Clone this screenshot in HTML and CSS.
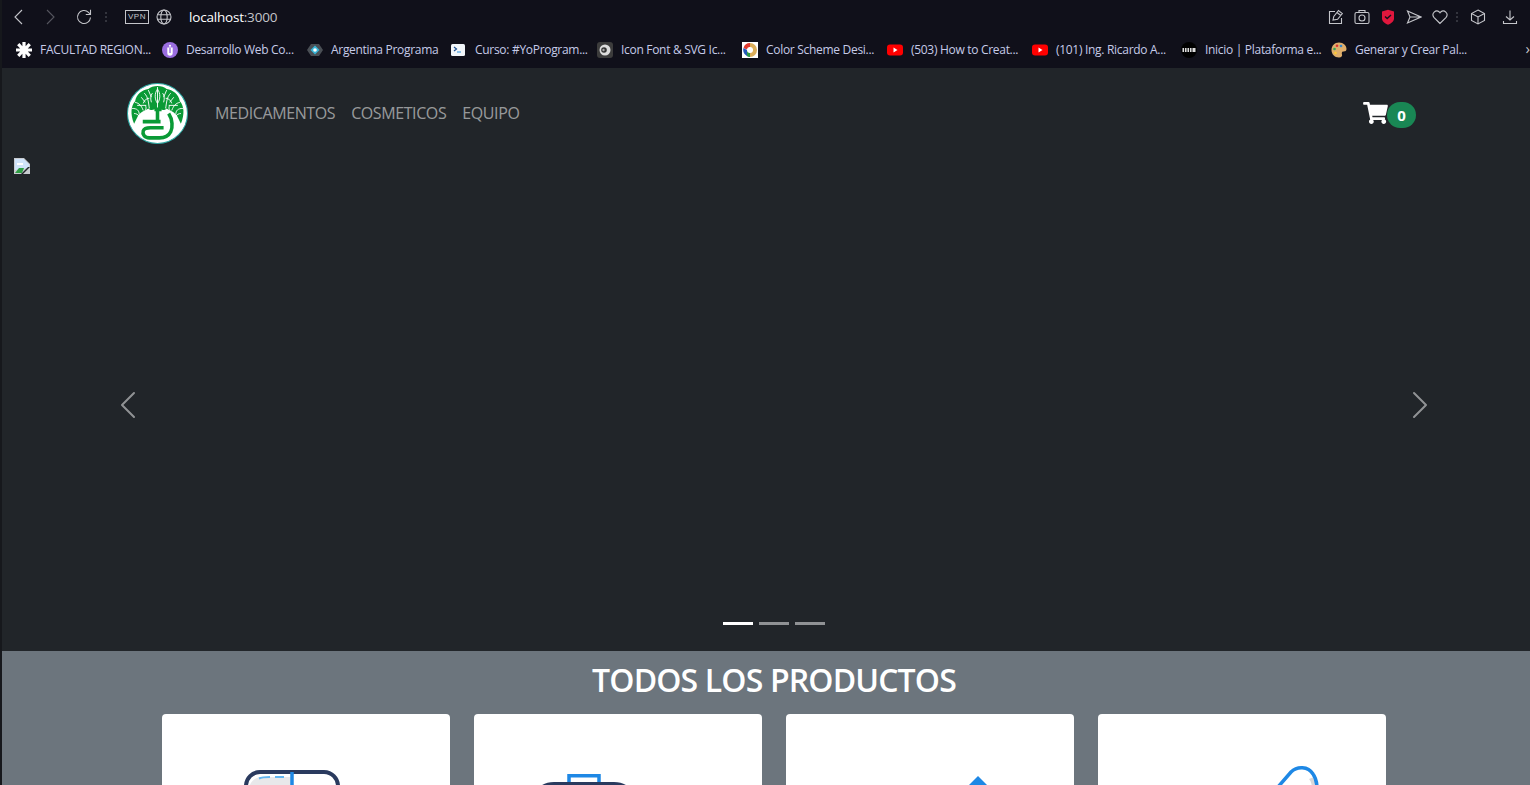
FILE: index.html
```html
<!DOCTYPE html>
<html lang="es">
<head>
<meta charset="utf-8">
<title>Farmacia</title>
<link rel="stylesheet" href="styles.css">
</head>
<body>
<div class="chrome">
  <div class="toolbar">
    <div class="tools-left">
      <svg class="ic back" viewBox="0 0 16 16"><path d="M12 1 5 8l7 7"/></svg>
      <svg class="ic fwd" viewBox="0 0 16 16"><path d="m4 1 7 7-7 7"/></svg>
      <svg class="ic reload" viewBox="0 0 16 16"><path d="M14.500 8.500a6.500 6.500 0 1 1-2-5.200L14 5M14.500 .8v4.700H9.800"/></svg>
      <span class="dots"><i></i><i></i><i></i></span>
      <span class="vpn">VPN</span>
      <svg class="ic globe" viewBox="0 0 16 16"><circle cx="8" cy="8" r="7"/><ellipse cx="8" cy="8" rx="3.200" ry="7"/><path d="M1.500 5.700h13M1.500 10.300h13"/></svg>
      <span class="url"><b>localhost</b>:3000</span>
    </div>
    <div class="tools-right">
      <svg class="ic" viewBox="0 0 16 16"><path d="M7 2.500H1.500v12h12V9"/><path d="m5 11 .8-3.500 4.700-6 3.800 3-4.700 5.800zM9 3.500l3.800 3"/></svg>
      <svg class="ic r-gap" viewBox="0 0 16 16"><rect x="1" y="3.500" width="14" height="11" rx="1.500"/><circle cx="8" cy="9" r="3"/><path d="M5 3.500V1.500h6v2"/></svg>
      <svg class="ic r-gap" viewBox="0 0 16 16"><path class="sh" d="M2 2.500 8 .8l6 1.700v7c0 3-3 5.200-6 6.200-3-1-6-3.200-6-6.200z"/><path class="ck" d="m5 7.500 2.200 2L11 6"/></svg>
      <svg class="ic r-gap" viewBox="0 0 16 16"><path d="M1.500 2 15 8 1.500 14 4 8zM4 8h11"/></svg>
      <svg class="ic r-gap" viewBox="0 0 16 16"><path d="M8 14.500 1.900 8.300a3.800 3.800 0 0 1 5.400-5.300l.7.800.7-.8a3.800 3.800 0 0 1 5.400 5.300z"/></svg>
      <span class="dots dots-right"><i></i><i></i><i></i></span>
      <svg class="ic r6" viewBox="0 0 16 16"><path d="M8 1 14.500 4.500v7L8 15 1.500 11.500v-7zM1.500 4.500 8 8l6.500-3.500M8 8v7"/></svg>
      <svg class="ic r7" viewBox="0 0 16 16"><path d="M8 1.500v9.500M4 7.500 8 11l4-3.500M1.500 12v2.500h13V12"/></svg>
    </div>
  </div>
  <div class="bookmarks">
    <a class="bm b1"><svg class="fav" viewBox="0 0 16 16"><path class="utn" d="M6.400 0h3.200v4.200L12.600 1l2.300 2.300-3.100 3.100H16v3.200h-4.200l3.100 3.100-2.300 2.300-3-3.200V16H6.400v-4.200l-3 3.200-2.300-2.300 3.100-3.100H0V6.400h4.200L1.100 3.300 3.400 1l3 3.200z"/></svg>FACULTAD REGION...</a>
    <a class="bm b2"><svg class="fav" viewBox="0 0 16 16"><circle cx="8" cy="8" r="8" fill="#9a6ee0"/><path d="M5.300 5.500v5.500a2.700 2.700 0 0 0 5.400 0V5.500z" fill="#fff"/><path d="M7.300 6v5h1.400V6z" fill="#9a6ee0"/><circle cx="8" cy="3.800" r="1.100" fill="#fff"/></svg>Desarrollo Web Co...</a>
    <a class="bm b3"><svg class="fav" viewBox="0 0 16 16"><path d="M4 2h8l4 6-4 6H4L0 8z" fill="#4a4f55"/><path d="M3.500 8 8 3.500 12.500 8 8 12.500z" fill="#37b6d8"/><circle cx="8" cy="8" r="1.800" fill="#fff"/></svg>Argentina Programa</a>
    <a class="bm b4"><svg class="fav" viewBox="0 0 16 16"><rect y="2" width="14" height="12" rx="1.500" fill="#f2f6fa"/><path d="m3 5 2.500 2L3 9" fill="none" stroke="#1c4f8f" stroke-width="1.200"/><path d="M6 10h4" stroke="#4aa2e0" stroke-width="1.200"/></svg>Curso: #YoProgram...</a>
    <a class="bm b5"><svg class="fav" viewBox="0 0 16 16"><rect width="16" height="16" rx="3" fill="#3c3c3c"/><circle cx="8" cy="8" r="5.500" fill="#dcdcdc"/><circle cx="7" cy="8" r="2.800" fill="#333"/><circle cx="6.500" cy="8" r="1.200" fill="#aaa"/></svg>Icon Font &amp; SVG Ic...</a>
    <a class="bm b6"><svg class="fav" viewBox="0 0 16 16"><rect width="16" height="16" fill="#fff"/><path d="M8 1a7 7 0 0 0-6.500 5L5 7.500 8 5z" fill="#e03a2e"/><path d="M8 1a7 7 0 0 1 7 7h-4L8 5z" fill="#dcae5a"/><path d="M15 8a7 7 0 0 1-7 7l-1-4 4-3z" fill="#dcae5a"/><path d="M8 15a7 7 0 0 1-6.500-9L5 8l3 3z" fill="#2458b8"/><path d="M5 8l3 3v4a7 7 0 0 1-3-1z" fill="#2f9a44"/><circle cx="8" cy="8" r="3" fill="#fff"/></svg>Color Scheme Desi...</a>
    <a class="bm b7"><svg class="fav" viewBox="0 0 16 16"><rect y="2.500" width="16" height="11" rx="3" fill="#f00"/><path d="m6.500 5.500 4 2.500-4 2.500z" fill="#fff"/></svg>(503) How to Creat...</a>
    <a class="bm b8"><svg class="fav" viewBox="0 0 16 16"><rect y="2.500" width="16" height="11" rx="3" fill="#f00"/><path d="m6.500 5.500 4 2.500-4 2.500z" fill="#fff"/></svg>(101) Ing. Ricardo A...</a>
    <a class="bm b9"><svg class="fav" viewBox="0 0 16 16"><circle cx="8" cy="8" r="8" fill="#000"/><path d="M1.500 6h13v4h-13z" fill="#ddd"/><path d="M3.500 6v4M6 6v4M8.500 6v4M11 6v4" stroke="#111"/></svg>Inicio | Plataforma e...</a>
    <a class="bm b10"><svg class="fav" viewBox="0 0 16 16"><path d="M8 .500c4.500 0 7.500 3 7.500 6.500 0 2.500-2.500 2.500-3.500 2.500S10.500 11 11 12.500s-.5 3-3 3C3.500 15.500.500 12 .500 8S3.500.500 8 .500z" fill="#dfae6b"/><circle cx="6" cy="3.800" r="1.300" fill="#d33"/><circle cx="10" cy="4" r="1.300" fill="#38c"/><circle cx="3.500" cy="7" r="1.300" fill="#3a5"/><circle cx="4.500" cy="11" r="1.300" fill="#fc3"/></svg>Generar y Crear Pal...</a>
    <span class="more">&#8250;</span>
  </div>
</div>
<div class="page">
  <nav class="navbar">
    <svg class="logo" viewBox="0 0 60 60">
      <circle cx="30" cy="30" r="29.500" fill="#fff" stroke="#2ba7a0"/>
      <path class="tree" d="M7 40C3 31 4 22 8 18 9 11 15 7 21 6c4-4 14-4 18 0 6 1 12 5 13 12 4 4 5 13 1 22l-4-8c-3-4-7-5-10-7-3 3-6 1-9-1-3 2-6 4-9 1-3 2-7 3-10 7z"/>
      <path class="veins" d="M30 24V4M30 20c-3-4-3-10 0-14 3 4 3 10 0 14M22 25c-1-6-1-11-5-15M38 25c1-6 1-11 5-15M16 27c-2-5-4-7-8-8M44 27c2-5 4-7 8-8M12 31c0-4-2-6-7-6M48 31c0-4 2-6 7-6M22 15c-3 0-5 2-6 5M38 15c3 0 5 2 6 5M25 10c-2 2-2 6-1 9M35 10c2 2 2 6 1 9M10 22h9M41 22h9M21 7l3 7M39 7l-3 7M7 30c2 0 4 1 5 3M53 30c-2 0-4 1-5 3M14 14l4 5M46 14l-4 5M18 22c1 2 1 3 0 5M42 22c-1 2-1 3 0 5"/>
      <path class="pot" d="M30 25v13M27 26h7M15.500 38H33M41 30c4 6 4 14 2 18-2 4-6 6-11 6H22c-5 0-7-4-6-7 1-3 4-3 7-3h13"/>
    </svg>
    <ul class="nav-links">
      <li>MEDICAMENTOS</li>
      <li>COSMETICOS</li>
      <li>EQUIPO</li>
    </ul>
    <div class="cart">
      <svg class="cart-ic" viewBox="0 0 576 512"><path d="M528.100 301.300l47.300-208C578.800 78.300 567.400 64 552 64H159.200l-9.200-44.800C147.800 8 137.900 0 126.500 0H24C10.700 0 0 10.700 0 24v16c0 13.300 10.700 24 24 24h69.900l70.200 343.400C147.300 417.100 136 435.200 136 456c0 30.900 25.100 56 56 56s56-25.100 56-56c0-15.700-6.400-29.800-16.800-40h209.600C430.400 426.200 424 440.300 424 456c0 30.900 25.100 56 56 56s56-25.100 56-56c0-22.200-12.900-41.300-31.600-50.400l5.500-24.300c3.400-15-8-29.300-23.400-29.300H218.100l-6.500-32h293.100c11.200 0 20.900-7.800 23.400-18.700z"/></svg>
      <span class="badge">0</span>
    </div>
  </nav>
  <section class="carousel">
    <svg class="broken" viewBox="0 0 16 16"><path d="M0 0h10l6 6v10H0z" fill="#c8ccd0"/><path d="M1 1h8.500L15 6.500V10L1 12z" fill="#cfe3fa"/><path d="M3 5h6v2H3z" fill="#fff"/><path d="M1 15l4-5h5l-2 5z" fill="#2f9e44"/><path d="M16 9 9 16h-2l7-7z" fill="#212529"/></svg>
    <button class="ctrl prev"><svg viewBox="0 0 16 16"><path d="M11.354 1.646a.5.500 0 0 1 0 .708L5.707 8l5.647 5.646a.5.500 0 0 1-.708.708l-6-6a.5.500 0 0 1 0-.708l6-6a.5.500 0 0 1 .708 0z"/></svg></button>
    <button class="ctrl next"><svg viewBox="0 0 16 16"><path d="M4.646 1.646a.5.500 0 0 1 .708 0l6 6a.5.500 0 0 1 0 .708l-6 6a.5.500 0 0 1-.708-.708L10.293 8 4.646 2.354a.5.500 0 0 1 0-.708z"/></svg></button>
    <div class="indicators"><i class="on"></i><i></i><i></i></div>
  </section>
  <section class="products">
    <h2>TODOS LOS PRODUCTOS</h2>
    <div class="cards">
      <div class="card c1"><svg class="pic" viewBox="0 0 100 40"><path d="M5 30c0-12 6-18 14-18h30v28H5z" fill="#e8e8ea"/><rect x="3" y="7" width="92" height="60" rx="14" class="navy"/><path d="M49 7v33" class="blue"/><path d="M16 13.500c2-1 4-1.500 11-1.500M32 12h9" class="light"/></svg></div>
      <div class="card c2"><svg class="pic" viewBox="0 0 100 40"><path d="M39 20V10.750h30V20" class="blue"/><path d="M4 45c0-18 8-25.500 20-25.500h60c12 0 20 7.500 20 25.500" class="navyline"/></svg></div>
      <div class="card c3"><svg class="pic" viewBox="0 0 100 40"><path d="M50 11l12 12H38z" class="solid"/></svg></div>
      <div class="card c4"><svg class="pic" viewBox="0 0 100 40"><path d="M64 12c2 3 3 8 3 12h-5c0-4-1-8-3-10z" fill="#d8d8da"/><path d="M28 22 41 7c6-6 17-6 22 2 3 4 4 9 4 15" class="blue"/></svg></div>
    </div>
  </section>
</div>
</body>
</html>
```
FILE: styles.css
```css
* { box-sizing: border-box; }
html { margin: 0; height: 785px; overflow: hidden; }
body {
  margin: 0;
  height: 785px;
  font-family: "Open Sans", "Noto Sans", "Liberation Sans", sans-serif;
  background: #212529;
  border-left: 2px solid #16181c;
  position: relative;
}
body::before {
  content: "";
  position: absolute;
  left: -1px;
  top: 0;
  width: 1px;
  height: 785px;
  background: linear-gradient(#b52a4c 0 467px, #4d1428 467px);
  z-index: 2;
}
.chrome { background: #10101a; height: 68px; margin-left: -2px; }
.toolbar { height: 34px; display: flex; align-items: center; justify-content: space-between; padding: 0 12px 0 10px; }
.tools-left, .tools-right { display: flex; align-items: center; }
.ic { width: 16px; height: 16px; fill: none; stroke: #c4c5ca; stroke-width: 1.100; flex: none; }
.fwd { margin-left: 17px; stroke: #55565f; }
.reload { margin-left: 17px; }
.dots { display: flex; flex-direction: column; gap: 2px; margin-left: 13px; }
.dots i { width: 2px; height: 2px; background: #33343d; display: block; }
.vpn { margin-left: 18px; width: 24px; height: 14px; border: 1px solid #c4c5ca; color: #c4c5ca; font: 8px/12px "Liberation Sans", sans-serif; letter-spacing: .6px; text-align: center; }
.globe { margin-left: 7px; }
.url { margin-left: 17px; font-size: 13.500px; color: #c4c5ca; letter-spacing: -.2px; }
.url b { font-weight: 400; color: #fff; }
.r-gap { margin-left: 10px; }
.sh { fill: #e0173d; stroke: none; }
.ck { stroke: #10101a; stroke-width: 1.400; }
.dots-right { margin-left: 8px; }
.r6 { margin-left: 12px; }
.r7 { margin-left: 16px; }
.bookmarks { height: 30px; display: flex; align-items: center; padding-left: 16px; position: relative; white-space: nowrap; }
.bm { display: flex; align-items: center; gap: 8px; font-size: 12px; color: #c6cbe8; letter-spacing: -.3px; flex: none; }
.b1 { width: 146px; }
.b2 { width: 145px; }
.b3 { width: 144px; }
.b4 { width: 146px; }
.b5 { width: 145px; }
.b6 { width: 145px; }
.b7 { width: 145px; }
.b8 { width: 149px; }
.b9 { width: 150px; }
.fav { width: 16px; height: 16px; flex: none; margin-top: 2px; }
.utn { fill: #fff; }
.more { position: absolute; right: 0; top: 4px; color: #c4c5ca; font-size: 15px; }
.navbar { height: 90px; display: flex; align-items: center; padding: 0 114px 0 125px; }
.logo { width: 61px; height: 61px; flex: none; }
.tree { fill: #0a9a36; }
.veins { fill: none; stroke: #fff; stroke-width: .9; }
.pot { fill: none; stroke: #0a9a36; stroke-width: 3.500; }
.nav-links { list-style: none; margin: 0 0 0 27px; padding: 0; display: flex; gap: 16px; font-size: 16px; color: rgba(255,255,255,.55); letter-spacing: -.4px; }
.cart { margin-left: auto; display: flex; align-items: center; }
.cart-ic { width: 25px; height: 22px; fill: #fff; }
.badge { background: #198754; color: #fff; font-size: 15px; font-weight: 700; width: 29px; height: 26px; border-radius: 13px; display: flex; align-items: center; justify-content: center; margin-left: -1px; margin-top: 4px; }
.carousel { height: 493px; position: relative; }
.broken { position: absolute; left: 12px; top: 0; width: 16px; height: 16px; }
.ctrl { position: absolute; top: 231px; width: 32px; height: 32px; padding: 0; background: none; border: 0; }
.ctrl svg { width: 32px; height: 32px; fill: #fff; opacity: .5; display: block; }
.prev { left: 110px; }
.next { left: 1402px; }
.indicators { position: absolute; left: 721px; top: 464px; display: flex; gap: 6px; }
.indicators i { width: 30px; height: 3px; background: #fff; opacity: .5; display: block; }
.indicators i.on { opacity: 1; }
.products { background: #6c757d; height: 134px; overflow: hidden; display: flex; flex-direction: column; align-items: center; padding-left: 16px; }
.products h2 { margin: 8px 0 0; color: #fff; font-size: 32px; font-weight: 600; line-height: 42px; letter-spacing: -.85px; }
.cards { display: flex; gap: 24px; margin-top: 13px; }
.card { width: 288px; height: 200px; flex: none; background: #fff; border-radius: 4px; padding-top: 51px; }
.c1 { padding-left: 81px; }
.c2 { padding-left: 56px; }
.c3 { padding-left: 142px; }
.c4 { padding-left: 152px; }
.pic { width: 100px; height: 40px; display: block; }
.navy { fill: none; stroke: #2a3a5e; stroke-width: 4; }
.navyline { fill: none; stroke: #2a3a5e; stroke-width: 5; }
.blue { fill: none; stroke: #1e88e5; stroke-width: 3.500; }
.light { stroke: #61b5f0; stroke-width: 2; fill: none; }
.solid { fill: #1e88e5; }
```
